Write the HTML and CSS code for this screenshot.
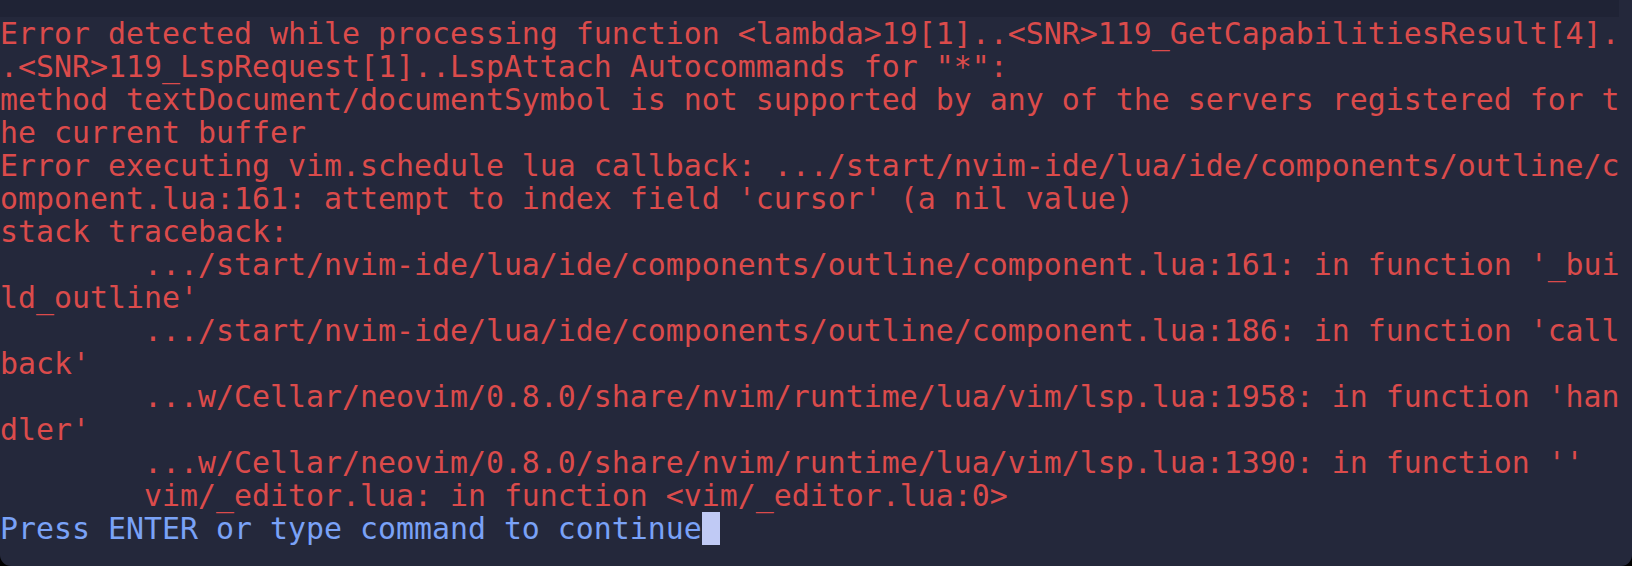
FILE: index.html
```html
<!DOCTYPE html>
<html>
<head>
<meta charset="utf-8">
<link rel="stylesheet" href="styles.css">
</head>
<body>
<div class="window">
  <div class="topbar"></div>
  <div class="screen">
    <div class="line err">Error detected while processing function &lt;lambda&gt;19[1]..&lt;SNR&gt;119_GetCapabilitiesResult[4].</div>
    <div class="line err">.&lt;SNR&gt;119_LspRequest[1]..LspAttach Autocommands for "*":</div>
    <div class="line err">method textDocument/documentSymbol is not supported by any of the servers registered for t</div>
    <div class="line err">he current buffer</div>
    <div class="line err">Error executing vim.schedule lua callback: .../start/nvim-ide/lua/ide/components/outline/c</div>
    <div class="line err">omponent.lua:161: attempt to index field 'cursor' (a nil value)</div>
    <div class="line err">stack traceback:</div>
    <div class="line err">        .../start/nvim-ide/lua/ide/components/outline/component.lua:161: in function '_bui</div>
    <div class="line err">ld_outline'</div>
    <div class="line err">        .../start/nvim-ide/lua/ide/components/outline/component.lua:186: in function 'call</div>
    <div class="line err">back'</div>
    <div class="line err">        ...w/Cellar/neovim/0.8.0/share/nvim/runtime/lua/vim/lsp.lua:1958: in function 'han</div>
    <div class="line err">dler'</div>
    <div class="line err">        ...w/Cellar/neovim/0.8.0/share/nvim/runtime/lua/vim/lsp.lua:1390: in function ''</div>
    <div class="line err">        vim/_editor.lua: in function &lt;vim/_editor.lua:0&gt;</div>
    <div class="line more">Press ENTER or type command to continue<span class="cursor"></span></div>
  </div>
</div>
</body>
</html>
```
FILE: styles.css
```css
html, body {
  margin: 0;
  padding: 0;
  background: #000000;
}

.window {
  width: 1632px;
  height: 566px;
  background: #24283b;
  border-radius: 0 0 11px 11px;
  overflow: hidden;
}

.topbar {
  width: 1619px;
  height: 17px;
  background: #1f2335;
}

.screen {
  font-family: "DejaVu Sans Mono", monospace;
  font-size: 29.9px;
  line-height: 33px;
}

.line {
  height: 33px;
  white-space: pre;
}

.err {
  color: #db4b4b;
}

.more {
  color: #7aa2f7;
}

.cursor {
  display: inline-block;
  width: 18px;
  height: 33px;
  vertical-align: top;
  background: #c0caf5;
}
```
